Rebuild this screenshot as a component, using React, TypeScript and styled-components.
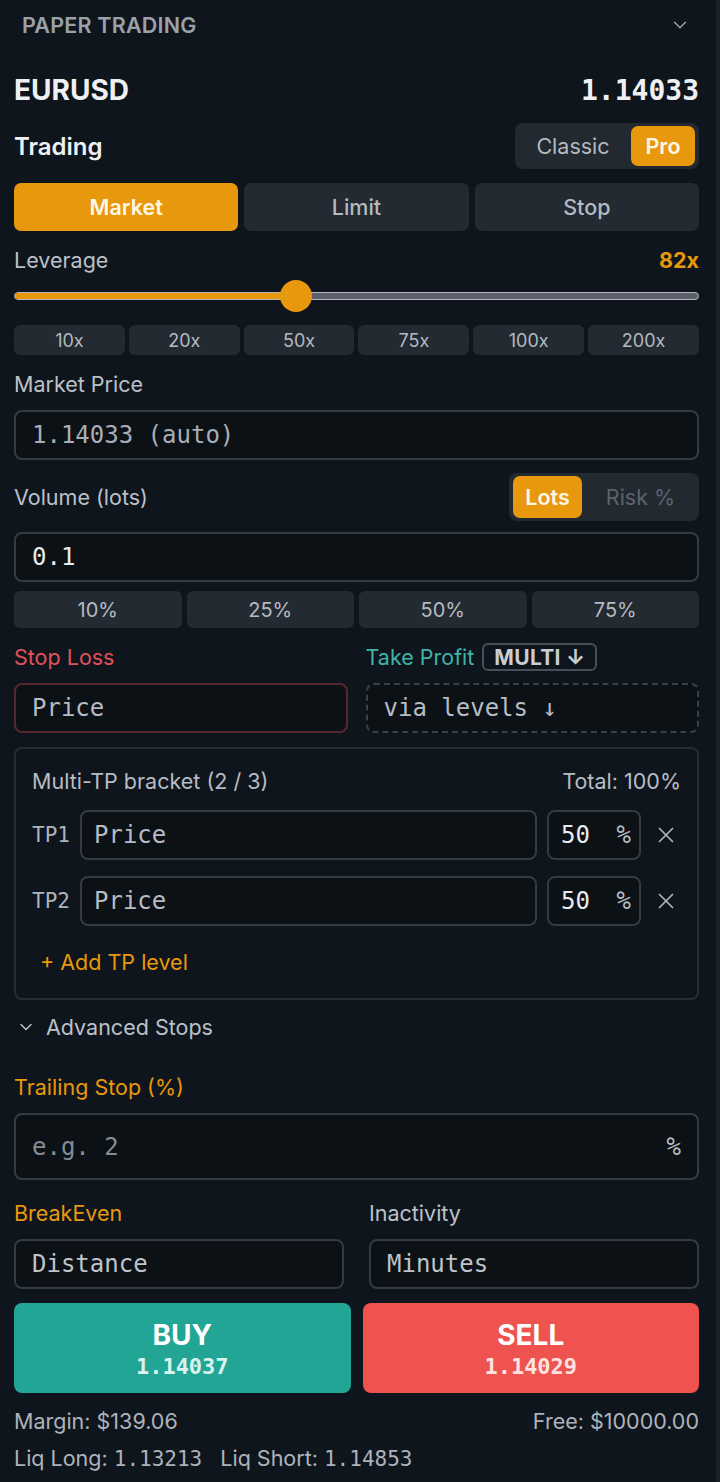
import React from "react";
import styled, { createGlobalStyle } from "styled-components";
import { ChevronDown, X } from "lucide-react";

const ORANGE = "#e8980c";
const TEAL = "#23a595";
const RED = "#ee5350";
const SANS = `Inter, "Noto Sans", "Liberation Sans", sans-serif`;
const MONO = `"DejaVu Sans Mono", "Liberation Mono", monospace`;

const GlobalStyle = createGlobalStyle`
  html, body {
    margin: 0;
    padding: 0;
    background: #0f151c;
  }
  * {
    box-sizing: border-box;
  }
`;

const Panel = styled.div`
  width: 720px;
  min-height: 1482px;
  background: #0f151c;
  border-right: 4px solid #1b2129;
  padding: 0 17px 0 14px;
  display: flex;
  flex-direction: column;
  font-family: ${SANS};
  color: #c3c8cf;
`;

const Row = styled.div<{ $top?: number; $h?: number; $gap?: number }>`
  display: flex;
  align-items: center;
  justify-content: ${({ $gap }) => ($gap ? "flex-start" : "space-between")};
  gap: ${({ $gap }) => $gap ?? 0}px;
  margin-top: ${({ $top }) => $top ?? 0}px;
  height: ${({ $h }) => ($h ? `${$h}px` : "auto")};
`;

const HeaderTitle = styled.div`
  font-size: 21.5px;
  font-weight: 600;
  color: #9aa1aa;
  padding-left: 8px;
  letter-spacing: 0.2px;
`;

const HeaderChevron = styled.div`
  display: flex;
  color: #9aa1aa;
  margin-right: 8px;
`;

const Symbol = styled.div`
  font-size: 28px;
  font-weight: 700;
  color: #eef0f3;
`;

const BigPrice = styled.div`
  font-family: ${MONO};
  font-size: 28px;
  font-weight: 700;
  color: #eef0f3;
`;

const SectionTitle = styled.div`
  font-size: 24px;
  font-weight: 600;
  color: #eef0f3;
`;

const Toggle = styled.div<{ $w: number; $h: number }>`
  display: flex;
  align-items: center;
  width: ${({ $w }) => $w}px;
  height: ${({ $h }) => $h}px;
  padding: 3px 4px;
  background: #222930;
  border-radius: 8px;
  gap: 4px;
`;

const ToggleOption = styled.div<{ $active?: boolean; $w?: number }>`
  flex: ${({ $w }) => ($w ? `0 0 ${$w}px` : "1")};
  height: 100%;
  display: flex;
  align-items: center;
  justify-content: center;
  border-radius: 7px;
  font-size: 21.5px;
  font-weight: ${({ $active }) => ($active ? 600 : 400)};
  background: ${({ $active }) => ($active ? ORANGE : "transparent")};
  color: ${({ $active, $w }) => ($active ? "#fff7e6" : $w ? "#b4bac2" : "#5c636c")};
`;

const Tabs = styled.div<{ $top: number }>`
  display: flex;
  gap: 6px;
  margin-top: ${({ $top }) => $top}px;
`;

const Tab = styled.div<{ $active?: boolean }>`
  flex: 1;
  height: 48px;
  display: flex;
  align-items: center;
  justify-content: center;
  border-radius: 7px;
  font-size: 21.5px;
  font-weight: ${({ $active }) => ($active ? 600 : 500)};
  background: ${({ $active }) => ($active ? ORANGE : "#232a31")};
  color: ${({ $active }) => ($active ? "#fff7e6" : "#b4bac2")};
`;

const Label = styled.div<{ $color?: string }>`
  font-size: 21.5px;
  color: ${({ $color }) => $color ?? "#bcc1c8"};
  white-space: nowrap;
`;

const LevValue = styled.div`
  font-size: 21.5px;
  font-weight: 700;
  color: ${ORANGE};
`;

const SliderWrap = styled.div`
  position: relative;
  height: 32px;
  margin-top: 8px;
  display: flex;
  align-items: center;
`;

const Track = styled.div`
  width: 100%;
  height: 8px;
  border-radius: 4px;
  background: #5d5f6b;
  border: 1.5px solid #b4b4be;
  overflow: hidden;
`;

const Fill = styled.div`
  height: 100%;
  background: ${ORANGE};
`;

const Thumb = styled.div`
  position: absolute;
  top: 0;
  width: 32px;
  height: 32px;
  margin-left: -16px;
  border-radius: 50%;
  background: ${ORANGE};
`;

const ChipRow = styled.div<{ $top: number; $gap: number }>`
  display: flex;
  gap: ${({ $gap }) => $gap}px;
  margin-top: ${({ $top }) => $top}px;
`;

const Chip = styled.div<{ $h: number; $size: number }>`
  flex: 1;
  height: ${({ $h }) => $h}px;
  display: flex;
  align-items: center;
  justify-content: center;
  border-radius: 6px;
  background: #232a31;
  color: #b4bac2;
  font-size: ${({ $size }) => $size}px;
`;

const Field = styled.div<{
  $top?: number;
  $h?: number;
  $border?: string;
  $dashed?: boolean;
  $w?: number;
  $grow?: boolean;
  $pad?: string;
}>`
  display: flex;
  align-items: center;
  justify-content: space-between;
  margin-top: ${({ $top }) => $top ?? 0}px;
  height: ${({ $h }) => $h ?? 50}px;
  flex: ${({ $w, $grow }) => ($w ? `0 0 ${$w}px` : $grow ? "1" : "none")};
  min-width: 0;
  padding: ${({ $pad }) => $pad ?? "0 16px"};
  background: #0c1116;
  border: 2px ${({ $dashed }) => ($dashed ? "dashed" : "solid")} ${({ $border }) => $border ?? "#343b44"};
  border-radius: 8px;
  font-family: ${MONO};
  font-size: 24px;
`;

const FieldText = styled.span<{ $color?: string }>`
  color: ${({ $color }) => $color ?? "#b7bcc4"};
  white-space: pre;
`;

const FieldSuffix = styled.span`
  font-family: ${MONO};
  font-size: 24px;
  color: #b7bcc4;
`;

const Pair = styled.div<{ $top: number; $gap: number }>`
  display: flex;
  gap: ${({ $gap }) => $gap}px;
  margin-top: ${({ $top }) => $top}px;
`;

const Half = styled.div`
  flex: 1;
  display: flex;
  align-items: center;
  gap: 8px;
  min-width: 0;
`;

const Badge = styled.div`
  height: 28px;
  padding: 0 10px;
  display: flex;
  align-items: center;
  border: 2px solid #474e58;
  border-radius: 6px;
  font-size: 21px;
  font-weight: 700;
  color: #c9ced5;
  letter-spacing: 0.3px;
`;

const Bracket = styled.div<{ $top: number }>`
  margin-top: ${({ $top }) => $top}px;
  border: 2px solid #262d35;
  border-radius: 8px;
  padding: 20px 16px 23px 16px;
  display: flex;
  flex-direction: column;
`;

const BracketHead = styled.div`
  display: flex;
  justify-content: space-between;
  font-size: 21.5px;
  color: #b7bcc4;
  height: 24px;
  align-items: center;
`;

const TpRow = styled.div<{ $top: number }>`
  display: flex;
  align-items: center;
  margin-top: ${({ $top }) => $top}px;
  gap: 10px;
`;

const TpTag = styled.div`
  width: 38px;
  font-family: ${MONO};
  font-size: 21px;
  color: #aeb3bb;
`;

const RemoveBtn = styled.div`
  width: 30px;
  display: flex;
  justify-content: center;
  color: #aeb3bb;
`;

const AddLevel = styled.div`
  margin-top: 23px;
  padding-left: 8px;
  font-size: 21.5px;
  color: ${ORANGE};
`;

const Disclosure = styled.div`
  display: flex;
  align-items: center;
  gap: 10px;
  margin-top: 15px;
  height: 24px;
  padding-left: 2px;
  font-size: 21.5px;
  color: #bcc1c8;
`;

const TradeBtn = styled.div<{ $bg: string; $fg: string }>`
  flex: 1;
  height: 90px;
  border-radius: 8px;
  background: ${({ $bg }) => $bg};
  display: flex;
  flex-direction: column;
  align-items: center;
  justify-content: center;
  gap: 2px;
  color: ${({ $fg }) => $fg};
`;

const TradeSide = styled.div`
  font-size: 28px;
  font-weight: 700;
  color: #ffffff;
`;

const TradePrice = styled.div`
  font-family: ${MONO};
  font-size: 22px;
  font-weight: 700;
`;

const Stat = styled.div`
  font-size: 21.5px;
  color: #aeb3bb;
  white-space: pre;
`;

const Mono = styled.span`
  font-family: ${MONO};
  font-size: 21px;
`;

const leverage = 82;
const leveragePct = 41.2;

export default function App() {
  return (
    <>
      <GlobalStyle />
      <Panel>
        <Row $h={50}>
          <HeaderTitle>PAPER TRADING</HeaderTitle>
          <HeaderChevron>
            <ChevronDown size={22} strokeWidth={1.6} />
          </HeaderChevron>
        </Row>

        <Row $top={20} $h={40}>
          <Symbol>EURUSD</Symbol>
          <BigPrice>1.14033</BigPrice>
        </Row>

        <Row $top={13}>
          <SectionTitle>Trading</SectionTitle>
          <Toggle $w={184} $h={46}>
            <ToggleOption $w={108}>Classic</ToggleOption>
            <ToggleOption $active>Pro</ToggleOption>
          </Toggle>
        </Row>

        <Tabs $top={14}>
          <Tab $active>Market</Tab>
          <Tab>Limit</Tab>
          <Tab>Stop</Tab>
        </Tabs>

        <Row $top={17} $h={24}>
          <Label>Leverage</Label>
          <LevValue>{leverage}x</LevValue>
        </Row>
        <SliderWrap>
          <Track>
            <Fill style={{ width: `${leveragePct}%` }} />
          </Track>
          <Thumb style={{ left: `${leveragePct}%` }} />
        </SliderWrap>
        <ChipRow $top={13} $gap={4}>
          {["10x", "20x", "50x", "75x", "100x", "200x"].map((v) => (
            <Chip key={v} $h={30} $size={18}>
              {v}
            </Chip>
          ))}
        </ChipRow>

        <Row $top={17} $h={24}>
          <Label>Market Price</Label>
        </Row>
        <Field $top={14}>
          <FieldText $color="#a9aeb6">1.14033 (auto)</FieldText>
        </Field>

        <Row $top={13}>
          <Label>Volume (lots)</Label>
          <Toggle $w={190} $h={48}>
            <ToggleOption $active $w={69}>Lots</ToggleOption>
            <ToggleOption>Risk %</ToggleOption>
          </Toggle>
        </Row>
        <Field $top={11}>
          <FieldText $color="#e8eaed">0.1</FieldText>
        </Field>
        <ChipRow $top={9} $gap={5}>
          {["10%", "25%", "50%", "75%"].map((v) => (
            <Chip key={v} $h={37} $size={20}>
              {v}
            </Chip>
          ))}
        </ChipRow>

        <Pair $top={15} $gap={18}>
          <Half>
            <Label $color="#e0525a">Stop Loss</Label>
          </Half>
          <Half>
            <Label $color="#3fb3a6">Take Profit</Label>
            <Badge>MULTI ↓</Badge>
          </Half>
        </Pair>
        <Pair $top={12} $gap={18}>
          <Field $grow $border="#552830">
            <FieldText>Price</FieldText>
          </Field>
          <Field $grow $dashed $border="#3a414a">
            <FieldText>via levels ↓</FieldText>
          </Field>
        </Pair>

        <Bracket $top={14}>
          <BracketHead>
            <span>Multi-TP bracket (2 / 3)</span>
            <span>Total: 100%</span>
          </BracketHead>
          {["TP1", "TP2"].map((tp, i) => (
            <TpRow key={tp} $top={i === 0 ? 17 : 16}>
              <TpTag>{tp}</TpTag>
              <Field $grow $h={50} $pad="0 12px">
                <FieldText>Price</FieldText>
              </Field>
              <Field $w={94} $h={50} $pad="0 8px 0 12px">
                <FieldText $color="#e8eaed">50</FieldText>
                <FieldSuffix>%</FieldSuffix>
              </Field>
              <RemoveBtn>
                <X size={26} strokeWidth={1.6} />
              </RemoveBtn>
            </TpRow>
          ))}
          <AddLevel>+ Add TP level</AddLevel>
        </Bracket>

        <Disclosure>
          <ChevronDown size={20} strokeWidth={1.8} />
          Advanced Stops
        </Disclosure>

        <Row $top={36} $h={24}>
          <Label $color={ORANGE}>Trailing Stop (%)</Label>
        </Row>
        <Field $top={14} $h={67}>
          <FieldText $color="#858b94">e.g. 2</FieldText>
          <FieldSuffix>%</FieldSuffix>
        </Field>

        <Pair $top={20} $gap={25}>
          <Half>
            <Label $color={ORANGE}>BreakEven</Label>
          </Half>
          <Half>
            <Label>Inactivity</Label>
          </Half>
        </Pair>
        <Pair $top={13} $gap={25}>
          <Field $grow>
            <FieldText $color="#bfc3ca">Distance</FieldText>
          </Field>
          <Field $grow>
            <FieldText $color="#bfc3ca">Minutes</FieldText>
          </Field>
        </Pair>

        <Pair $top={14} $gap={12}>
          <TradeBtn $bg={TEAL} $fg="#d9f3ef">
            <TradeSide>BUY</TradeSide>
            <TradePrice>1.14037</TradePrice>
          </TradeBtn>
          <TradeBtn $bg={RED} $fg="#fde2e1">
            <TradeSide>SELL</TradeSide>
            <TradePrice>1.14029</TradePrice>
          </TradeBtn>
        </Pair>

        <Row $top={16} $h={24}>
          <Stat>Margin: $139.06</Stat>
          <Stat>Free: $10000.00</Stat>
        </Row>
        <Row $top={13} $h={24} $gap={18}>
          <Stat>
            Liq Long: <Mono>1.13213</Mono>
          </Stat>
          <Stat>
            Liq Short: <Mono>1.14853</Mono>
          </Stat>
        </Row>
      </Panel>
    </>
  );
}
